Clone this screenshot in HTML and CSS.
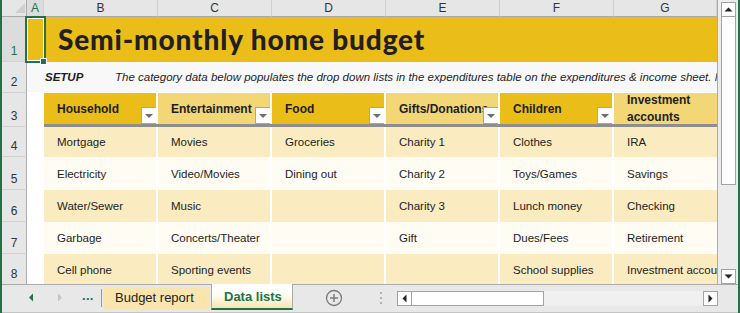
FILE: index.html
```html
<!DOCTYPE html>
<html>
<head>
<meta charset="utf-8">
<link rel="stylesheet" href="styles.css">
</head>
<body>
<div class="app">
  <div class="main">
    <div class="sheet">
      <div class="row colhdr">
        <div class="corner"><svg width="25" height="16" viewBox="0 0 25 16"><polygon points="23,3 23,13 13,13" fill="#cfcfcf"/></svg></div>
        <div class="ch w-a selhdr">A</div>
        <div class="ch w-c">B</div>
        <div class="ch w-c">C</div>
        <div class="ch w-c">D</div>
        <div class="ch w-c">E</div>
        <div class="ch w-c">F</div>
        <div class="ch w-g">G</div>
      </div>

      <div class="row r1">
        <div class="rh selrh">1</div>
        <div class="title">Semi-monthly home budget</div>
      </div>

      <div class="row r2">
        <div class="rh">2</div>
        <div class="setup"><span class="setup-label">SETUP</span><span>The category data below populates the drop down lists in the expenditures table on the expenditures &amp; income sheet. Modify the categories as needed.</span></div>
      </div>

      <div class="row r3">
        <div class="rh">3</div>
        <div class="blank w-a"></div>
        <div class="hdrs">
          <div class="hc w-c dark"><span class="lbl">Household</span><span class="dd"></span></div>
          <div class="hc w-c light"><span class="lbl">Entertainment</span><span class="dd"></span></div>
          <div class="hc w-c dark"><span class="lbl">Food</span><span class="dd"></span></div>
          <div class="hc w-c light"><span class="lbl">Gifts/Donations</span><span class="dd"></span></div>
          <div class="hc w-c dark"><span class="lbl">Children</span><span class="dd"></span></div>
          <div class="hc w-g light wrap"><span class="lbl2">Investment<br>accounts</span></div>
        </div>
      </div>

      <div class="row r4 band">
        <div class="rh">4</div>
        <div class="blank w-a"></div>
        <div class="dc w-c">Mortgage</div>
        <div class="dc w-c">Movies</div>
        <div class="dc w-c">Groceries</div>
        <div class="dc w-c">Charity 1</div>
        <div class="dc w-c">Clothes</div>
        <div class="dc w-g">IRA</div>
      </div>

      <div class="row r5 plain">
        <div class="rh">5</div>
        <div class="blank w-a"></div>
        <div class="dc w-c">Electricity</div>
        <div class="dc w-c">Video/Movies</div>
        <div class="dc w-c">Dining out</div>
        <div class="dc w-c">Charity 2</div>
        <div class="dc w-c">Toys/Games</div>
        <div class="dc w-g">Savings</div>
      </div>

      <div class="row r6 band">
        <div class="rh">6</div>
        <div class="blank w-a"></div>
        <div class="dc w-c">Water/Sewer</div>
        <div class="dc w-c">Music</div>
        <div class="dc w-c"></div>
        <div class="dc w-c">Charity 3</div>
        <div class="dc w-c">Lunch money</div>
        <div class="dc w-g">Checking</div>
      </div>

      <div class="row r7 plain">
        <div class="rh">7</div>
        <div class="blank w-a"></div>
        <div class="dc w-c">Garbage</div>
        <div class="dc w-c">Concerts/Theater</div>
        <div class="dc w-c"></div>
        <div class="dc w-c">Gift</div>
        <div class="dc w-c">Dues/Fees</div>
        <div class="dc w-g">Retirement</div>
      </div>

      <div class="row r8 band">
        <div class="rh">8</div>
        <div class="blank w-a"></div>
        <div class="dc w-c">Cell phone</div>
        <div class="dc w-c">Sporting events</div>
        <div class="dc w-c"></div>
        <div class="dc w-c"></div>
        <div class="dc w-c">School supplies</div>
        <div class="dc w-g">Investment accounts</div>
      </div>

      <div class="selection"></div>
      <div class="handle"></div>
    </div>

    <div class="vscroll">
      <div class="sbtn vup"><svg width="13" height="13" viewBox="0 0 13 13"><polygon points="2.5,8.5 10.5,8.5 6.5,4.5" fill="#222"/></svg></div>
      <div class="vthumb"></div>
      <div class="vtrack"></div>
      <div class="sbtn vdown"><svg width="13" height="13" viewBox="0 0 13 13"><polygon points="2.5,4.5 10.5,4.5 6.5,8.5" fill="#222"/></svg></div>
    </div>
  </div>

  <div class="tabbar">
    <div class="nav">
      <svg class="nav-l" width="6" height="9" viewBox="0 0 6 9"><polygon points="5,0.5 5,8.5 1,4.5" fill="#217346"/></svg>
      <svg class="nav-r" width="6" height="9" viewBox="0 0 6 9"><polygon points="1,0.5 1,8.5 5,4.5" fill="#c4c4c4"/></svg>
      <span class="more">...</span>
    </div>
    <div class="sep"></div>
    <div class="tab">Budget report</div>
    <div class="tab active">Data lists</div>
    <div class="addwrap">
      <svg width="18" height="18" viewBox="0 0 18 18"><circle cx="9" cy="9" r="7.5" fill="none" stroke="#7b7b7b" stroke-width="1.3"/><path d="M9 5v8M5 9h8" stroke="#7b7b7b" stroke-width="1.5"/></svg>
    </div>
    <div class="vdots"><i></i><i></i><i></i></div>
    <div class="hscroll">
      <div class="hbtn"><svg width="13" height="13" viewBox="0 0 13 13"><polygon points="8.5,2.5 8.5,10.5 4.5,6.5" fill="#222"/></svg></div>
      <div class="hthumb"></div>
      <div class="htrack"></div>
      <div class="hbtn"><svg width="13" height="13" viewBox="0 0 13 13"><polygon points="4.5,2.5 4.5,10.5 8.5,6.5" fill="#222"/></svg></div>
    </div>
  </div>
</div>
</body>
</html>
```

FILE: styles.css
```css
html, body {
  margin: 0;
  padding: 0;
}
body {
  width: 740px;
  height: 313px;
  overflow: hidden;
  font-family: "Liberation Sans", Arial, sans-serif;
  color: #1e1e1e;
}
.app {
  width: 740px;
  height: 313px;
  box-sizing: border-box;
  border-left: 2px solid #217346;
  border-right: 2px solid #217346;
  display: flex;
  flex-direction: column;
  background: #e8e8e8;
}
.main {
  display: flex;
  height: 284px;
  flex: none;
}
.sheet {
  width: 716px;
  box-sizing: border-box;
  border-right: 1px solid #ababab;
  background: #fff;
  overflow: hidden;
  position: relative;
  flex: none;
}
.row {
  display: flex;
  flex: none;
}
.w-a { width: 17px; flex: none; box-sizing: border-box; }
.w-c { width: 114px; flex: none; box-sizing: border-box; }
.w-g { width: 103px; flex: none; box-sizing: border-box; }

/* column header */
.colhdr { height: 17px; }
.corner {
  width: 25px;
  height: 17px;
  box-sizing: border-box;
  border-right: 1px solid #ababab;
  border-bottom: 1px solid #ababab;
  background: #e6e6e6;
  flex: none;
}
.corner svg { display: block; }
.ch {
  height: 17px;
  border-right: 1px solid #cfcfcf;
  border-bottom: 1px solid #ababab;
  background: #e6e6e6;
  text-align: center;
  font-size: 12px;
  line-height: 16px;
  color: #333;
}
.ch.selhdr { background: #dcdcdc; color: #217346; }

/* row header */
.rh {
  width: 25px;
  flex: none;
  box-sizing: border-box;
  border-right: 1px solid #ababab;
  border-bottom: 1px solid #d2d2d2;
  background: #e6e6e6;
  color: #333;
  font-size: 12px;
  display: flex;
  align-items: flex-end;
  justify-content: center;
  padding-bottom: 3px;
  line-height: 14px;
}
.rh.selrh { background: #dcdcdc; color: #217346; }

.r1 { height: 45px; }
.r2 { height: 31px; }
.r3 { height: 34px; }
.r4 { height: 30px; }
.r5 { height: 33px; }
.r6 { height: 32px; }
.r7 { height: 32px; }
.r8 { height: 31px; }

.title {
  flex: 1;
  background: #ebbd19;
  font-family: Lato, "Liberation Sans", sans-serif;
  font-weight: 900;
  font-size: 28px;
  line-height: 45px;
  padding-left: 31px;
  color: #231f20;
  letter-spacing: 0.85px;
  white-space: nowrap;
  overflow: hidden;
}

.setup {
  flex: 1;
  background: #f8f8f8;
  border-bottom: 1px solid #fff;
  font-size: 11.5px;
  font-style: italic;
  line-height: 30px;
  padding-left: 18px;
  white-space: nowrap;
  overflow: hidden;
  color: #1e1e1e;
}
.setup-label {
  display: inline-block;
  width: 70px;
  font-weight: bold;
}

.blank { background: #fff; }

.hdrs {
  display: flex;
  border-bottom: 3px solid #8e8e8e;
  height: 31px;
}
.hc {
  height: 31px;
  border-right: 2px solid #fff;
  position: relative;
  padding-left: 13px;
  padding-top: 1px;
  box-sizing: border-box;
  font-size: 12px;
  font-weight: bold;
  line-height: 30px;
  white-space: nowrap;
  overflow: hidden;
  color: #1e1e1e;
}
.hc.dark { background: #ebbd19; }
.hc.light { background: #f3d676; }
.hc.wrap { line-height: 17px; display: flex; align-items: center; border-right: none; padding-top: 0; }
.dd {
  position: absolute;
  right: -1px;
  bottom: 0;
  width: 16px;
  height: 17px;
  box-sizing: border-box;
  border: 1px solid #a6a6a6;
  background: #fff;
}
.dd::after {
  content: "";
  position: absolute;
  left: 3px;
  top: 6px;
  border-left: 4px solid transparent;
  border-right: 4px solid transparent;
  border-top: 4px solid #6e6e6e;
}

.dc {
  border-right: 2px solid #fff;
  padding-left: 13px;
  font-size: 11.5px;
  white-space: nowrap;
  overflow: hidden;
  display: flex;
  align-items: center;
  color: #1e1e1e;
}
.dc.w-g { border-right: none; }
.band .dc { background: #faebc0; }
.plain .dc { background: #fffcf3; }

.selection {
  position: absolute;
  left: 23px;
  top: 16px;
  width: 21px;
  height: 47px;
  box-sizing: border-box;
  border: 2px solid #217346;
  box-shadow: inset 0 0 0 1px #fff;
}
.handle {
  position: absolute;
  left: 38px;
  top: 58px;
  width: 7px;
  height: 7px;
  box-sizing: border-box;
  background: #217346;
  border: 1px solid #fff;
}

/* vertical scroll */
.vscroll {
  width: 20px;
  flex: none;
  background: #ececec;
  display: flex;
  flex-direction: column;
  padding: 2px 2px 0 3px;
  box-sizing: border-box;
}
.sbtn {
  width: 15px;
  height: 15px;
  box-sizing: border-box;
  border: 1px solid #a3a3a3;
  background: #fff;
  flex: none;
}
.sbtn svg { display: block; margin: 0; }
.vthumb {
  width: 15px;
  height: 168px;
  box-sizing: border-box;
  border: 1px solid #a3a3a3;
  border-top: none;
  background: #fff;
  flex: none;
}
.vtrack { flex: 1; }

/* tab bar */
.tabbar {
  height: 29px;
  flex: none;
  box-sizing: border-box;
  border-top: 1px solid #ababab;
  border-bottom: 1px solid #c4c4c4;
  display: flex;
  align-items: flex-start;
  background: #e8e8e8;
  font-family: "Liberation Sans", Arial, sans-serif;
}
.nav {
  width: 99px;
  height: 26px;
  flex: none;
  position: relative;
}
.nav-l { position: absolute; left: 26px; top: 8px; }
.nav-r { position: absolute; left: 55px; top: 8px; }
.more {
  position: absolute;
  left: 80px;
  top: 3px;
  font-weight: bold;
  font-size: 13px;
  color: #217346;
  letter-spacing: 0.3px;
}
.sep {
  width: 1px;
  height: 18px;
  margin-top: 4px;
  background: #9a9a9a;
  flex: none;
}
.tab {
  margin-left: 2px;
  margin-top: 2px;
  height: 23px;
  width: 106px;
  box-sizing: border-box;
  background: #fae5ae;
  font-size: 13px;
  line-height: 22px;
  padding-left: 11px;
  white-space: nowrap;
  color: #222;
  flex: none;
}
.tab.active {
  margin-left: 1px;
  margin-top: -1px;
  height: 26px;
  width: 82px;
  background: linear-gradient(#ffffff 0%, #fffdf6 45%, #f8e6b2 100%);
  border-left: 1px solid #ababab;
  border-right: 1px solid #ababab;
  border-bottom: 2px solid #217346;
  color: #217346;
  font-weight: bold;
  padding-left: 12px;
  line-height: 26px;
}
.addwrap {
  margin-left: 32px;
  margin-top: 4px;
  width: 18px;
  height: 18px;
  flex: none;
}
.addwrap svg { display: block; }
.vdots {
  margin-left: 37px;
  margin-top: 7px;
  width: 2px;
  flex: none;
  display: flex;
  flex-direction: column;
  gap: 3px;
}
.vdots i {
  display: block;
  width: 2px;
  height: 2px;
  background: #b4b4b4;
}
.hscroll {
  margin-left: 15px;
  margin-top: 6px;
  width: 321px;
  height: 15px;
  flex: none;
  display: flex;
  background: #f0f0f0;
}
.hbtn {
  width: 15px;
  height: 15px;
  box-sizing: border-box;
  border: 1px solid #a3a3a3;
  background: #fff;
  flex: none;
}
.hbtn svg { display: block; }
.hthumb {
  width: 132px;
  height: 15px;
  box-sizing: border-box;
  border: 1px solid #a3a3a3;
  border-left: none;
  background: #fff;
  flex: none;
}
.htrack { flex: 1; }
```
